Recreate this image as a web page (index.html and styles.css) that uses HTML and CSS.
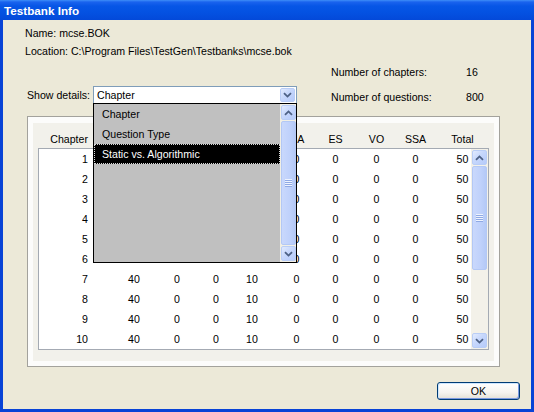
FILE: index.html
```html
<!DOCTYPE html>
<html>
<head>
<meta charset="utf-8">
<title>Testbank Info</title>
<link rel="stylesheet" href="styles.css">
</head>
<body>
<div class="window">
  <div class="titlebar">Testbank Info</div>
  <div class="client">
    <div class="info">
      <div>Name: mcse.BOK</div>
      <div>Location: C:\Program Files\TestGen\Testbanks\mcse.bok</div>
    </div>
    <div class="controls">
      <div class="show">
        <span class="show-label">Show details:</span>
        <div class="combo">
          <span class="combo-text">Chapter</span>
          <span class="sb-btn combo-btn"><svg width="9" height="6" viewBox="0 0 9 6"><path d="M1 1.2 L4.5 4.6 L8 1.2" stroke="#4d6185" stroke-width="1.8" fill="none"/></svg></span>
          <div class="popup">
            <div class="popup-items">
              <div class="item">Chapter</div>
              <div class="item">Question Type</div>
              <div class="item selected">Static vs. Algorithmic</div>
            </div>
            <div class="vscroll">
              <span class="sb-btn"><svg width="9" height="6" viewBox="0 0 9 6"><path d="M1 4.8 L4.5 1.4 L8 4.8" stroke="#4d6185" stroke-width="1.8" fill="none"/></svg></span>
              <div class="track"><div class="thumb full"><span class="grip"></span></div></div>
              <span class="sb-btn"><svg width="9" height="6" viewBox="0 0 9 6"><path d="M1 1.2 L4.5 4.6 L8 1.2" stroke="#4d6185" stroke-width="1.8" fill="none"/></svg></span>
            </div>
          </div>
        </div>
      </div>
      <div class="counts">
        <span>Number of chapters:</span><span>16</span>
        <span>Number of questions:</span><span>800</span>
      </div>
    </div>
    <div class="frame">
      <div class="panel">
        <div class="thead">
          <span class="c1">Chapter</span><span>MC</span><span>TF</span><span>MR</span><span>SA</span><span>MA</span><span>ES</span><span>VO</span><span>SSA</span><span>Total</span>
        </div>
        <div class="list">
          <div class="rows">
            <div class="row"><span class="c1">1</span><span>40</span><span>0</span><span>0</span><span>10</span><span>0</span><span>0</span><span>0</span><span>0</span><span>50</span></div>
            <div class="row"><span class="c1">2</span><span>40</span><span>0</span><span>0</span><span>10</span><span>0</span><span>0</span><span>0</span><span>0</span><span>50</span></div>
            <div class="row"><span class="c1">3</span><span>40</span><span>0</span><span>0</span><span>10</span><span>0</span><span>0</span><span>0</span><span>0</span><span>50</span></div>
            <div class="row"><span class="c1">4</span><span>40</span><span>0</span><span>0</span><span>10</span><span>0</span><span>0</span><span>0</span><span>0</span><span>50</span></div>
            <div class="row"><span class="c1">5</span><span>40</span><span>0</span><span>0</span><span>10</span><span>0</span><span>0</span><span>0</span><span>0</span><span>50</span></div>
            <div class="row"><span class="c1">6</span><span>40</span><span>0</span><span>0</span><span>10</span><span>0</span><span>0</span><span>0</span><span>0</span><span>50</span></div>
            <div class="row"><span class="c1">7</span><span>40</span><span>0</span><span>0</span><span>10</span><span>0</span><span>0</span><span>0</span><span>0</span><span>50</span></div>
            <div class="row"><span class="c1">8</span><span>40</span><span>0</span><span>0</span><span>10</span><span>0</span><span>0</span><span>0</span><span>0</span><span>50</span></div>
            <div class="row"><span class="c1">9</span><span>40</span><span>0</span><span>0</span><span>10</span><span>0</span><span>0</span><span>0</span><span>0</span><span>50</span></div>
            <div class="row"><span class="c1">10</span><span>40</span><span>0</span><span>0</span><span>10</span><span>0</span><span>0</span><span>0</span><span>0</span><span>50</span></div>
          </div>
          <div class="vscroll table-scroll">
            <span class="sb-btn"><svg width="9" height="6" viewBox="0 0 9 6"><path d="M1 4.8 L4.5 1.4 L8 4.8" stroke="#4d6185" stroke-width="1.8" fill="none"/></svg></span>
            <div class="track"><div class="thumb part"><span class="grip"></span></div></div>
            <span class="sb-btn"><svg width="9" height="6" viewBox="0 0 9 6"><path d="M1 1.2 L4.5 4.6 L8 1.2" stroke="#4d6185" stroke-width="1.8" fill="none"/></svg></span>
          </div>
        </div>
      </div>
    </div>
    <div class="footer">
      <button class="ok">OK</button>
    </div>
  </div>
</div>
</body>
</html>
```

FILE: styles.css
```css
* { box-sizing: border-box; }
html, body { margin: 0; padding: 0; }
body {
  width: 534px;
  height: 412px;
  overflow: hidden;
  font-family: "Liberation Sans", Arial, sans-serif;
  font-size: 10.6px;
  color: #000;
  background: #ece9d8;
}
.window {
  width: 534px;
  height: 412px;
  display: flex;
  flex-direction: column;
  background: #0843d6;
}
.titlebar {
  height: 20px;
  line-height: 21px;
  padding-left: 4px;
  color: #fff;
  font-family: "Liberation Sans", Arial, sans-serif;
  font-weight: bold;
  font-size: 11.7px;
  background: linear-gradient(to bottom, #3e8ef8 0, #1a63ee 2px, #0756e6 6px, #0452e2 60%, #0349d9 100%);
}
.client {
  flex: 1;
  margin: 0 3px 3px;
  background: #ece9d8;
  display: flex;
  flex-direction: column;
}
.info {
  padding: 4px 0 0 22px;
  line-height: 18px;
}
.controls {
  display: flex;
  align-items: flex-end;
  padding-left: 24px;
}
.show {
  display: flex;
  align-items: center;
  margin-bottom: 6px;
}
.show-label {
  width: 66px;
  white-space: nowrap;
}
.combo {
  position: relative;
  width: 204px;
  height: 18px;
  border: 1px solid #7f9db9;
  background: #fff;
  display: flex;
  align-items: center;
}
.combo-text {
  flex: 1;
  padding-left: 3px;
}
.sb-btn {
  display: flex;
  align-items: center;
  justify-content: center;
  width: 15px;
  height: 15px;
  border: 1px solid #b9cdf6;
  border-radius: 2px;
  background: linear-gradient(135deg, #e2ebfe 0%, #c6d7fc 45%, #b5cafa 100%);
  flex: none;
}
.combo-btn {
  width: 15px;
  height: 14px;
  margin-right: 1px;
}
.popup {
  position: absolute;
  left: -1px;
  top: 16px;
  width: 204px;
  height: 160px;
  border: 1px solid #000;
  background: #c0c0c0;
  display: flex;
  z-index: 5;
}
.popup-items { flex: 1; }
.item {
  height: 20px;
  line-height: 20px;
  padding-left: 8px;
  white-space: nowrap;
}
.item.selected {
  background: #000;
  color: #fff;
  outline: 1px dotted #d8d8d8;
  outline-offset: -1px;
}
.vscroll {
  width: 16px;
  padding: 1px 0 1px 1px;
  display: flex;
  flex-direction: column;
  background: #f1efe5;
}
.track {
  flex: 1;
  padding: 1px 0;
  display: flex;
  flex-direction: column;
}
.thumb {
  border: 1px solid #b3c8f5;
  border-radius: 2px;
  background: linear-gradient(to right, #c9d8fc 0%, #bfd1fb 60%, #b4c9f7 100%);
  display: flex;
  align-items: center;
  justify-content: center;
}
.thumb.full { flex: 1; }
.thumb.part { height: 104px; }
.grip {
  width: 7px;
  height: 8px;
  background: repeating-linear-gradient(to bottom, #eef3fe 0 1px, #8fa9e4 1px 2px);
}
.counts {
  margin-left: 34px;
  display: grid;
  grid-template-columns: 135px auto;
  line-height: 25px;
  white-space: nowrap;
}
.frame {
  margin: 6px 0 0 24px;
  width: 473px;
  border: 1px solid #a3a29c;
  background: #fcfcfb;
  padding: 6px 5px 5px 5px;
}
.panel {
  background: #f2f1eb;
  padding: 8px 5px 11px 5px;
}
.thead, .row {
  display: grid;
  grid-template-columns: 77px 36px 50px 28px 44px 45px 33px 49px 29px 65px;
  text-align: center;
  white-space: nowrap;
}
.thead {
  height: 17px;
  line-height: 17px;
  padding-left: 1px;
}
.row {
  height: 20px;
  line-height: 20px;
}
.c1 {
  text-align: right;
  padding-right: 28px;
}
.list {
  height: 202px;
  border: 1px solid #a4aab3;
  background: #fff;
  display: flex;
}
.rows {
  flex: 1;
  min-width: 0;
  overflow: hidden;
}
.table-scroll {
  width: 17px;
  padding: 1px 1px 1px 1px;
  background: #f3f1e9;
}
.footer {
  display: flex;
  justify-content: flex-end;
  padding: 15px 11px 0 0;
}
.ok {
  width: 83px;
  height: 18px;
  padding: 0;
  font: inherit;
  color: #000;
  border: 1px solid #003c74;
  border-radius: 3px;
  background: linear-gradient(to bottom, #ffffff 0%, #f5f4ef 60%, #e3e0d6 100%);
  box-shadow: inset 1px 1px 0 #cee7ff, inset -1px -1px 0 #7a99e0;
}
```
